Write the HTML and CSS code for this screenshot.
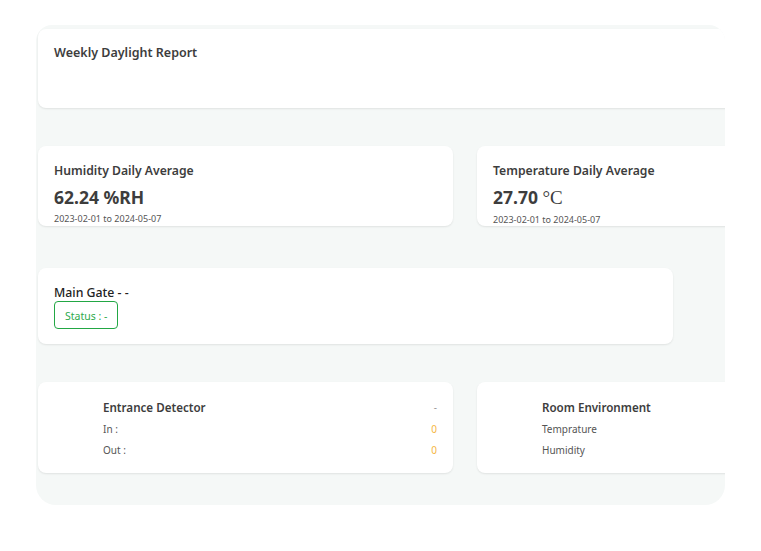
FILE: index.html
```html
<!DOCTYPE html>
<html>
<head>
<meta charset="utf-8">
<link rel="stylesheet" href="styles.css">
</head>
<body>
<div class="page">
  <div class="board">
    <div class="grid">
      <section class="card card-weekly span-12">
        <h2 class="card-title">Weekly Daylight Report</h2>
      </section>

      <section class="card card-stat span-6 row-2">
        <h3 class="stat-title">Humidity Daily Average</h3>
        <div class="stat-value">62.24 %RH</div>
        <div class="stat-range">2023-02-01 to 2024-05-07</div>
      </section>
      <section class="card card-stat span-6 row-2">
        <h3 class="stat-title">Temperature Daily Average</h3>
        <div class="stat-value">27.70 <span class="unit">°C</span></div>
        <div class="stat-range">2023-02-01 to 2024-05-07</div>
      </section>

      <section class="card card-gate span-9 row-3">
        <h3 class="gate-title">Main Gate - -</h3>
        <span class="status-badge">Status : -</span>
      </section>

      <section class="card card-device span-6 row-4">
        <div class="device-head">
          <h3 class="device-title">Entrance Detector</h3>
          <span class="device-state">-</span>
        </div>
        <div class="device-row"><span>In :</span><span class="count">0</span></div>
        <div class="device-row"><span>Out :</span><span class="count">0</span></div>
      </section>
      <section class="card card-device span-6 row-4">
        <div class="device-head">
          <h3 class="device-title">Room Environment</h3>
        </div>
        <div class="device-row"><span>Temprature</span></div>
        <div class="device-row"><span>Humidity</span></div>
      </section>
    </div>
  </div>
</div>
</body>
</html>
```

FILE: styles.css
```css
* { box-sizing: border-box; }

body {
  margin: 0;
  background: #ffffff;
  font-family: "Noto Sans", "Open Sans", sans-serif;
  color: #3b3b3b;
}

.page {
  padding: 25px 0 0 36px;
}

.board {
  width: 689px;
  height: 480px;
  background: #f5f8f7;
  border-radius: 16px 16px 20px 20px;
  overflow: hidden;
  padding: 4px 0 0 2px;
}

.grid {
  width: 854px;
  display: grid;
  grid-template-columns: repeat(12, 1fr);
  column-gap: 24px;
}

.span-12 { grid-column: span 12; }
.span-9 { grid-column: 1 / span 9; }
.span-6 { grid-column: span 6; }

.row-2 { margin-top: 38px; }
.row-3 { margin-top: 42px; }
.row-4 { margin-top: 38px; }

.card {
  background: #ffffff;
  border-radius: 8px;
  box-shadow: 0 1px 2px rgba(0, 0, 0, 0.09);
}

h2, h3 { margin: 0; }

.card-weekly {
  height: 79px;
  padding: 15px 16px;
}

.card-title {
  font-size: 12.5px;
  font-weight: 600;
  color: #3d3d3d;
  line-height: 18px;
}

.card-stat {
  height: 80px;
  padding: 16px 16px 0;
}

.stat-title {
  font-size: 12.2px;
  font-weight: 600;
  color: #3d3d3d;
  line-height: 18px;
}

.stat-value {
  margin-top: 6px;
  font-size: 17.5px;
  font-weight: 700;
  color: #3d3d3d;
  line-height: 22px;
}

.unit {
  font-family: "Liberation Serif", serif;
  font-weight: 400;
  font-size: 19px;
}

.stat-range {
  margin-top: 5px;
  font-size: 9px;
  color: #555;
  line-height: 12px;
}

.card-gate {
  height: 76px;
  padding: 17px 16px 0;
}

.gate-title {
  font-size: 12.3px;
  font-weight: 500;
  color: #222;
  line-height: 16px;
}

.status-badge {
  display: inline-flex;
  align-items: center;
  height: 28px;
  padding: 1px 10px 0;
  border: 1px solid #22a744;
  border-radius: 4px;
  color: #2eaa4c;
  font-size: 10.5px;
}

.card-device {
  height: 91px;
  padding: 17px 16px 0 65px;
}

.device-head {
  display: flex;
  justify-content: space-between;
  align-items: center;
  height: 16px;
}

.device-title {
  font-size: 11.6px;
  font-weight: 600;
  color: #3d3d3d;
}

.device-state {
  font-size: 10px;
  color: #999;
}

.device-row {
  display: flex;
  justify-content: space-between;
  align-items: center;
  height: 20px;
  margin-top: 1px;
  font-size: 10px;
  color: #555;
}

.device-head + .device-row { margin-top: 4px; }

.count { color: #f5b642; }
```
